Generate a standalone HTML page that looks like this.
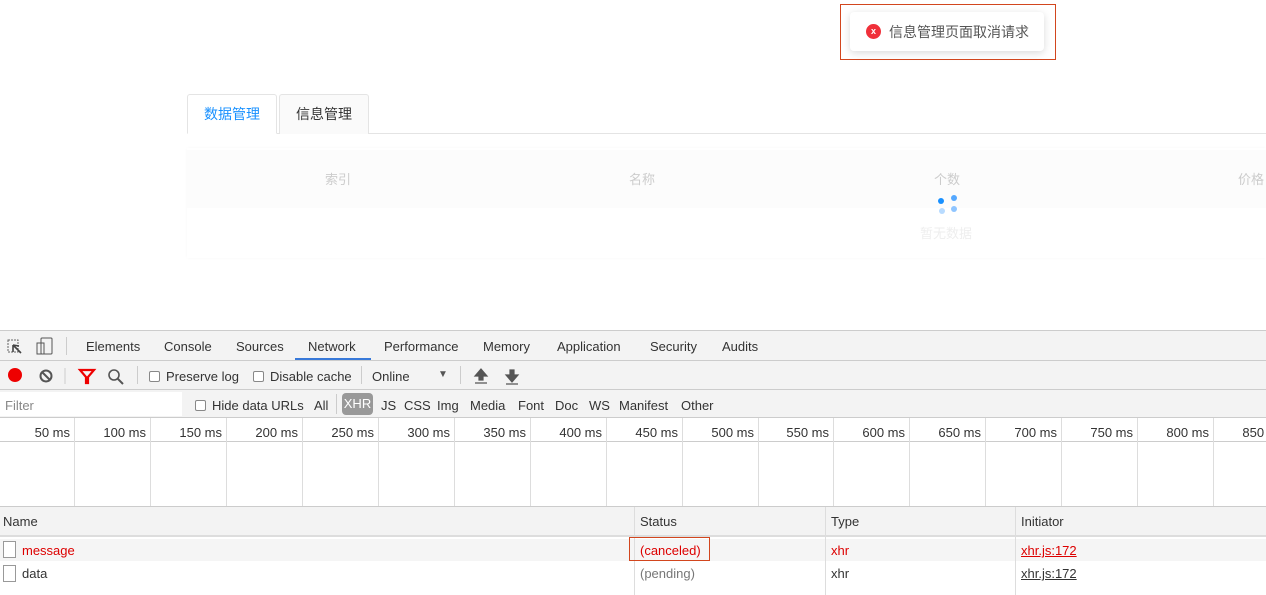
<!DOCTYPE html>
<html><head><meta charset="utf-8"><style>
*{margin:0;padding:0;box-sizing:border-box}
body{width:1266px;height:595px;overflow:hidden;background:#fff;font-family:"Liberation Sans","Noto Sans CJK SC",sans-serif;position:relative;font-size:13px;color:#333}
.a{position:absolute;white-space:nowrap}
.dt{font-family:"Liberation Sans",sans-serif;font-size:13px;color:#333}
.cb{display:inline-block;width:11px;height:11px;border:1px solid #888;border-radius:2px;background:#fff;vertical-align:-1px;margin-right:6px}
.vl{position:absolute;width:1px;background:#ddd}
</style></head><body>
<div class="a" style="left:840px;top:4px;width:216px;height:56px;border:1px solid #d2461e"></div>
<div class="a" style="left:850px;top:12px;width:194px;height:39px;background:#fff;border-radius:4px;box-shadow:0 2px 8px rgba(0,0,0,.15)"></div>
<div class="a" style="left:866px;top:24px;width:15px;height:15px;border-radius:50%;background:#f0303a;color:#fff;font-size:9px;line-height:15px;text-align:center;font-weight:bold">x</div>
<div class="a" style="left:889px;top:22px;font-size:14px;color:#555">信息管理页面取消请求</div>
<div class="a" style="left:187px;top:133px;width:1079px;height:1px;background:#e4e4e4"></div>
<div class="a" style="left:187px;top:94px;width:90px;height:40px;border:1px solid #e4e4e4;border-bottom:1px solid #fff;border-radius:3px 3px 0 0;background:#fff;color:#1890ff;font-size:14px;line-height:38px;text-align:center">数据管理</div>
<div class="a" style="left:279px;top:94px;width:90px;height:40px;border:1px solid #e4e4e4;border-bottom:none;border-radius:3px 3px 0 0;background:#fafafa;color:#333;font-size:14px;line-height:38px;text-align:center">信息管理</div>
<div class="a" style="left:187px;top:148px;width:1079px;height:110px;background:#fff;box-shadow:0 0 3px rgba(0,0,0,.03)"></div>
<div class="a" style="left:187px;top:150px;width:1079px;height:58px;background:#fcfcfc"></div>
<div class="a" style="left:325px;top:169px;color:#ccc">索引</div>
<div class="a" style="left:629px;top:169px;color:#ccc">名称</div>
<div class="a" style="left:934px;top:169px;color:#ccc">个数</div>
<div class="a" style="left:1238px;top:169px;color:#ccc">价格</div>
<div class="a" style="left:938px;top:198px;width:6px;height:6px;border-radius:50%;background:#1890ff"></div>
<div class="a" style="left:951px;top:195px;width:6px;height:6px;border-radius:50%;background:#55a8ff"></div>
<div class="a" style="left:939px;top:208px;width:6px;height:6px;border-radius:50%;background:#b8dbff"></div>
<div class="a" style="left:951px;top:206px;width:6px;height:6px;border-radius:50%;background:#8fc5ff"></div>
<div class="a" style="left:920px;top:223px;color:#eee">暂无数据</div>
<div class="a" style="left:0;top:330px;width:1266px;height:88px;background:#f3f3f3;border-top:1px solid #ccc"></div>
<div class="a" style="left:0;top:360px;width:1266px;height:1px;background:#ccc"></div>
<div class="a" style="left:0;top:389px;width:1266px;height:1px;background:#ccc"></div>
<div class="a" style="left:0;top:417px;width:1266px;height:1px;background:#ccc"></div>
<svg class="a" style="left:6px;top:337px" width="50" height="20"><rect x="2" y="3" width="10" height="12" fill="none" stroke="#666" stroke-dasharray="2,1"/><path d="M7 8 L15 16 M7 8 L7 15 M7 8 L13 9" stroke="#444" stroke-width="1.6" fill="none"/><rect x="31" y="6" width="7" height="11" fill="none" stroke="#555"/><rect x="35" y="1" width="11" height="16" rx="1" fill="none" stroke="#555"/></svg>
<div class="a" style="left:66px;top:337px;width:1px;height:18px;background:#ccc"></div>
<div class="a dt" style="left:86px;top:339px">Elements</div>
<div class="a dt" style="left:164px;top:339px">Console</div>
<div class="a dt" style="left:236px;top:339px">Sources</div>
<div class="a dt" style="left:308px;top:339px">Network</div>
<div class="a" style="left:295px;top:358px;width:76px;height:2px;background:#3879d9"></div>
<div class="a dt" style="left:384px;top:339px">Performance</div>
<div class="a dt" style="left:483px;top:339px">Memory</div>
<div class="a dt" style="left:557px;top:339px">Application</div>
<div class="a dt" style="left:650px;top:339px">Security</div>
<div class="a dt" style="left:722px;top:339px">Audits</div>
<svg class="a" style="left:6px;top:366px" width="125" height="20"><circle cx="9" cy="9" r="7" fill="#e00"/><circle cx="40" cy="10" r="5.5" fill="none" stroke="#555" stroke-width="2"/><path d="M36 6 L44 14" stroke="#555" stroke-width="2"/><line x1="59" y1="2" x2="59" y2="18" stroke="#ccc"/><path d="M74 4 L88 4 L82 11 L82 17 L80 17 L80 11 Z" fill="none" stroke="#e00" stroke-width="2.2"/><circle cx="108" cy="9" r="5" fill="none" stroke="#555" stroke-width="1.6"/><path d="M112 13 L117 18" stroke="#555" stroke-width="2"/></svg>
<div class="a" style="left:137px;top:366px;width:1px;height:18px;background:#ccc"></div>
<div class="a dt" style="left:149px;top:369px"><span class="cb"></span>Preserve log</div>
<div class="a dt" style="left:253px;top:369px"><span class="cb"></span>Disable cache</div>
<div class="a" style="left:361px;top:366px;width:1px;height:18px;background:#ccc"></div>
<div class="a dt" style="left:372px;top:369px">Online</div>
<div class="a" style="left:438px;top:369px;font-size:10px;color:#555">▼</div>
<div class="a" style="left:460px;top:366px;width:1px;height:18px;background:#ccc"></div>
<svg class="a" style="left:472px;top:366px" width="50" height="20"><path d="M9 3 L3 10 L7 10 L7 14 L11 14 L11 10 L15 10 Z M3 17 H15" stroke="#555" fill="#555" stroke-width="1.2"/><path d="M40 16 L34 9 L38 9 L38 4 L42 4 L42 9 L46 9 Z M34 18 H46" stroke="#555" fill="#555" stroke-width="1.2"/></svg>
<div class="a" style="left:0;top:392px;width:182px;height:24px;background:#fff"></div>
<div class="a dt" style="left:5px;top:398px;color:#888">Filter</div>
<div class="a dt" style="left:195px;top:398px"><span class="cb"></span>Hide data URLs</div>
<div class="a dt" style="left:314px;top:398px">All</div>
<div class="a" style="left:336px;top:394px;width:1px;height:20px;background:#ccc"></div>
<div class="a dt" style="left:342px;top:393px;width:31px;height:22px;background:#999;color:#fff;border-radius:4px;line-height:22px;text-align:center">XHR</div>
<div class="a dt" style="left:381px;top:398px">JS</div>
<div class="a dt" style="left:404px;top:398px">CSS</div>
<div class="a dt" style="left:437px;top:398px">Img</div>
<div class="a dt" style="left:470px;top:398px">Media</div>
<div class="a dt" style="left:518px;top:398px">Font</div>
<div class="a dt" style="left:555px;top:398px">Doc</div>
<div class="a dt" style="left:589px;top:398px">WS</div>
<div class="a dt" style="left:619px;top:398px">Manifest</div>
<div class="a dt" style="left:681px;top:398px">Other</div>
<div class="a" style="left:0;top:441px;width:1266px;height:1px;background:#ccc"></div>
<div id="tl"></div>
<div class="a" style="left:0;top:506px;width:1266px;height:31px;background:#f3f3f3;border-top:1px solid #ccc;border-bottom:2px solid #ddd"></div>
<div class="a dt" style="left:3px;top:514px">Name</div>
<div class="a dt" style="left:640px;top:514px">Status</div>
<div class="a dt" style="left:831px;top:514px">Type</div>
<div class="a dt" style="left:1021px;top:514px">Initiator</div>
<div class="a" style="left:0;top:539px;width:1266px;height:22px;background:#f5f5f5"></div>
<div class="vl" style="left:634px;top:507px;height:88px"></div>
<div class="vl" style="left:825px;top:507px;height:88px"></div>
<div class="vl" style="left:1015px;top:507px;height:88px"></div>
<div class="a" style="left:3px;top:541px;width:13px;height:17px;border:1px solid #999;background:#fff"></div>
<div class="a" style="left:3px;top:565px;width:13px;height:17px;border:1px solid #999;background:#fff"></div>
<div class="a dt" style="left:22px;top:543px;color:#d00">message</div>
<div class="a dt" style="left:22px;top:566px">data</div>
<div class="a" style="left:629px;top:537px;width:81px;height:24px;border:1px solid #d2461e"></div>
<div class="a dt" style="left:640px;top:543px;color:#d00">(canceled)</div>
<div class="a dt" style="left:640px;top:566px;color:#777">(pending)</div>
<div class="a dt" style="left:831px;top:543px;color:#d00">xhr</div>
<div class="a dt" style="left:831px;top:566px">xhr</div>
<div class="a dt" style="left:1021px;top:543px;color:#d00;text-decoration:underline">xhr.js:172</div>
<div class="a dt" style="left:1021px;top:566px;text-decoration:underline">xhr.js:172</div>
<script>
var h='';for(var i=1;i<=17;i++){var x=Math.round(i*75.95-2);h+='<div class="vl" style="left:'+x+'px;top:418px;height:88px"></div><div class="a dt" style="left:'+(x-70)+'px;top:425px;width:66px;text-align:right">'+(i*50)+' ms</div>';}
document.getElementById('tl').innerHTML=h;
</script>
</body></html>
